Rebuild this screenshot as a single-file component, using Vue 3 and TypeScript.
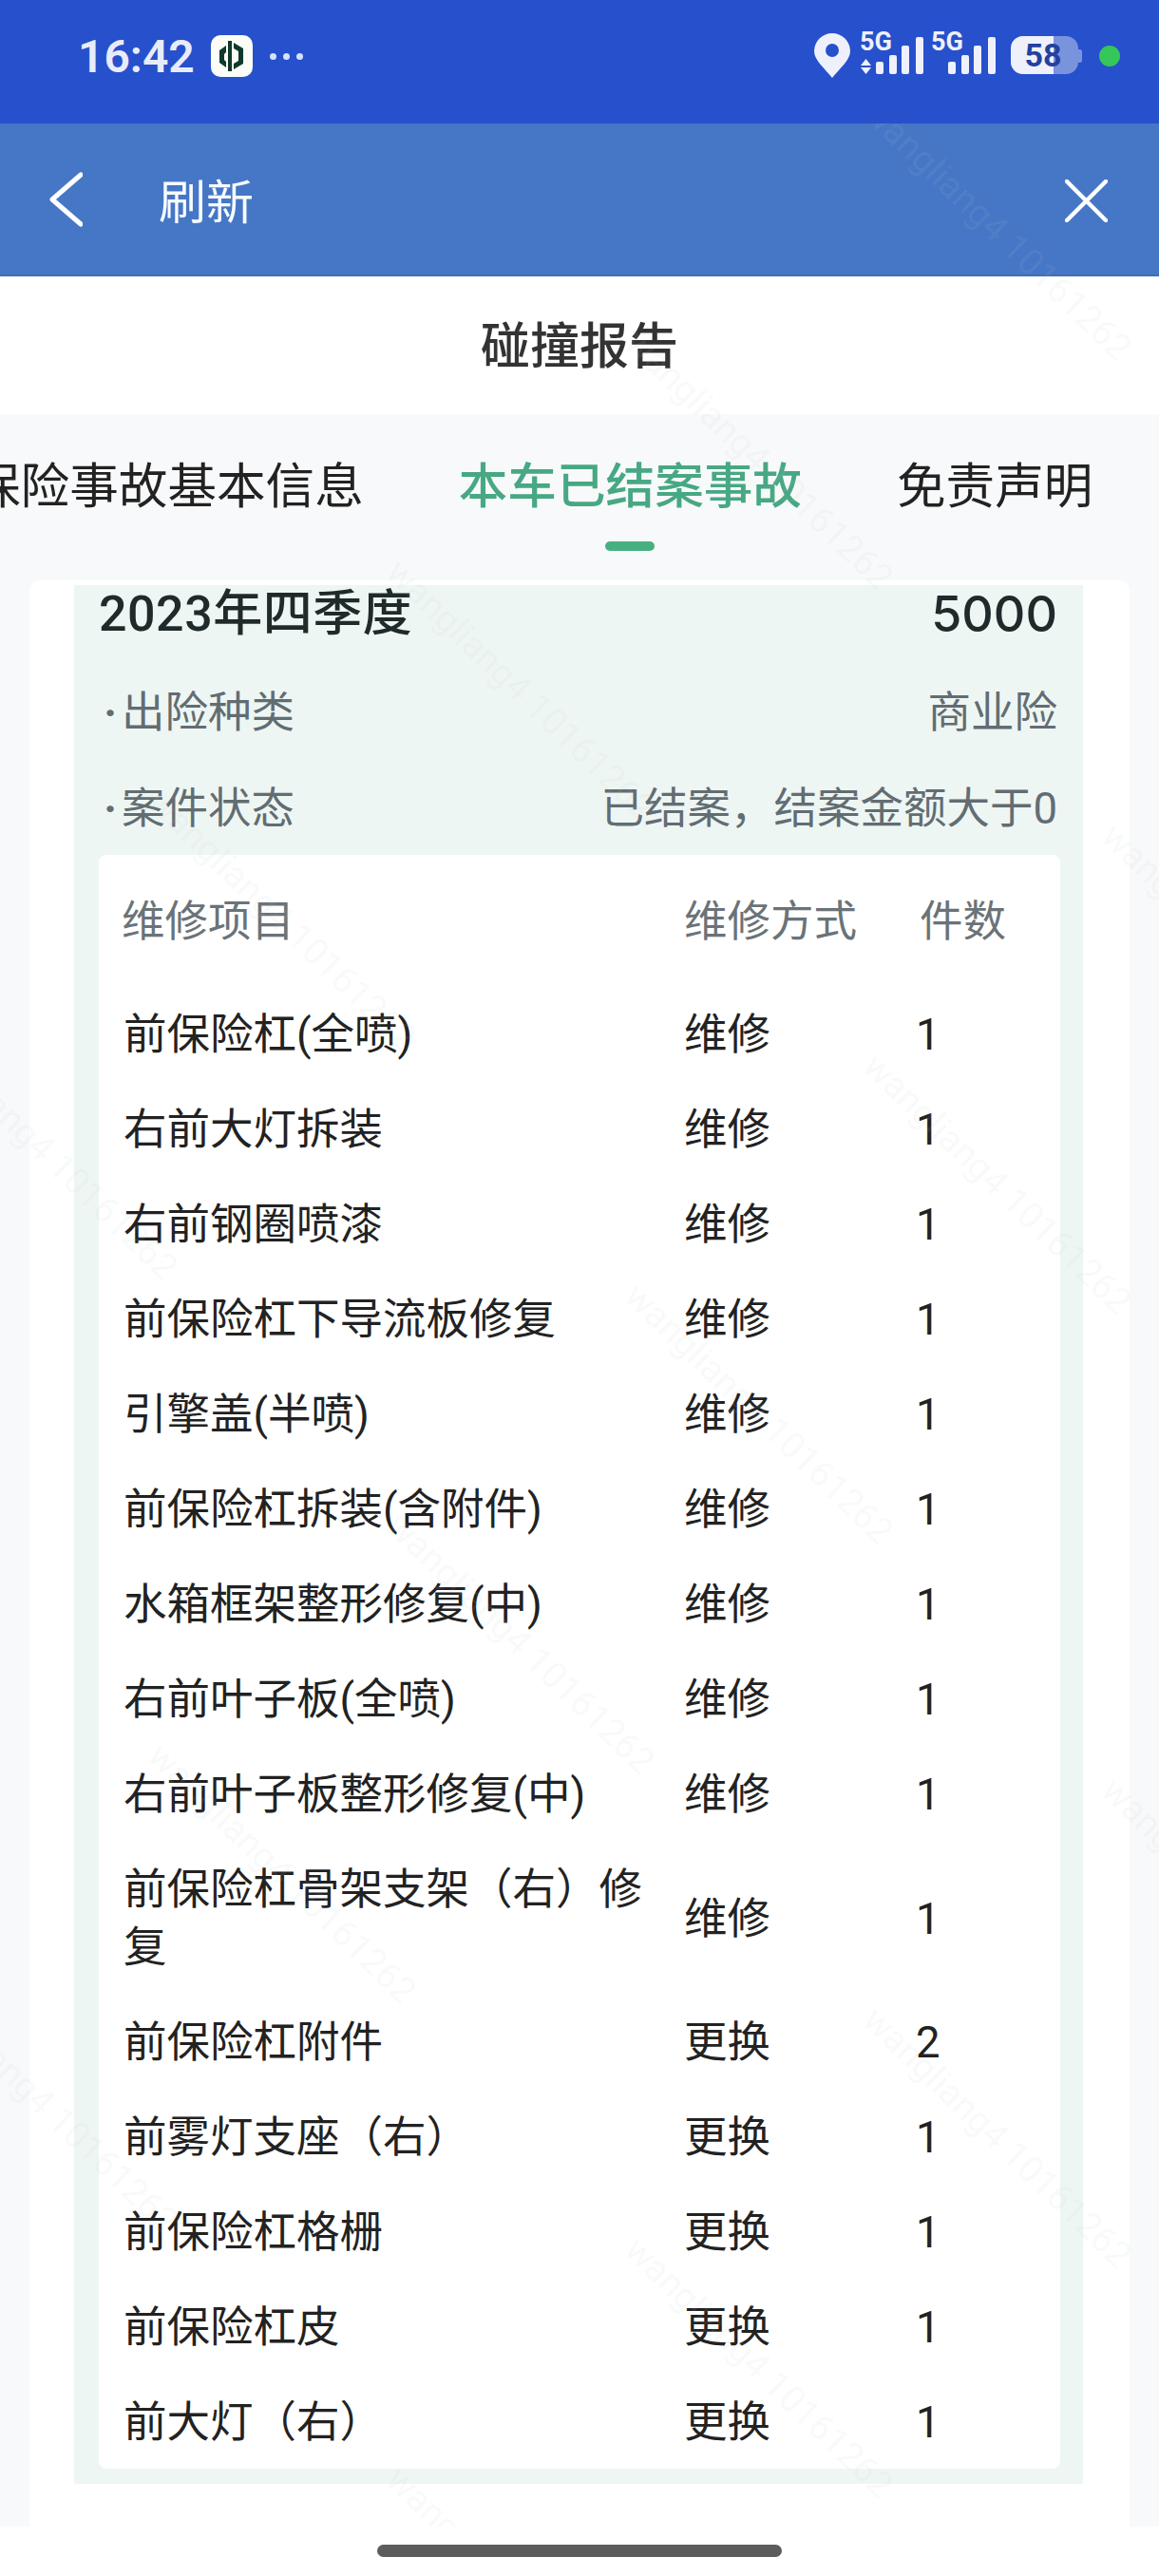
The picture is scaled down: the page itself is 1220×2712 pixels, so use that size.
<script setup lang="ts">
interface RepairRow {
  name: string
  way: string
  count: number
}

const rows: RepairRow[] = [
  { name: '前保险杠(全喷)', way: '维修', count: 1 },
  { name: '右前大灯拆装', way: '维修', count: 1 },
  { name: '右前钢圈喷漆', way: '维修', count: 1 },
  { name: '前保险杠下导流板修复', way: '维修', count: 1 },
  { name: '引擎盖(半喷)', way: '维修', count: 1 },
  { name: '前保险杠拆装(含附件)', way: '维修', count: 1 },
  { name: '水箱框架整形修复(中)', way: '维修', count: 1 },
  { name: '右前叶子板(全喷)', way: '维修', count: 1 },
  { name: '右前叶子板整形修复(中)', way: '维修', count: 1 },
  { name: '前保险杠骨架支架（右）修复', way: '维修', count: 1 },
  { name: '前保险杠附件', way: '更换', count: 2 },
  { name: '前雾灯支座（右）', way: '更换', count: 1 },
  { name: '前保险杠格栅', way: '更换', count: 1 },
  { name: '前保险杠皮', way: '更换', count: 1 },
  { name: '前大灯（右）', way: '更换', count: 1 },
]

const tabs = ['保险事故基本信息', '本车已结案事故', '免责声明']

// watermark sits on a slanted lattice over the whole webview
const marks: { left: number; top: number }[] = []
for (let col = 0; col < 3; col++) {
  for (let i = -2; i < 5; i++) {
    marks.push({ left: 1050 - 251 * i, top: 112 + 242 * i + 1004 * col })
  }
}
</script>

<template>
  <div class="screen">
    <header class="status">
      <span class="time">16:42</span>
      <svg class="app-icon" viewBox="0 0 44 44" width="44" height="44">
        <rect width="44" height="44" rx="10" fill="#fbfcf6" />
        <path d="M9 16l7-5v7l-2 2v6l2 2v6l-7-5z" fill="#11382c" />
        <path d="M18 6h4v32h-4z" fill="#11382c" />
        <path d="M24 8l10 6v16l-10 6v-6l5-3V17l-5-3z" fill="#11382c" />
      </svg>
      <span class="more"><i></i><i></i><i></i></span>
      <svg class="indicators" viewBox="857 29 322 60" width="322" height="60">
        <path d="M876 82C868 72 857 63 857 54a19 19 0 0 1 38 0C895 63 884 72 876 82z" fill="#eef1fb" />
        <circle cx="876" cy="53" r="7" fill="#2750cc" />
        <text x="905" y="53" class="net">5G</text>
        <path d="M911.500 62L917 69H906zM906 71H917L911.500 78z" fill="#eef1fb" />
        <rect x="922" y="65" width="8" height="13" rx="2" fill="#eef1fb" />
        <rect x="936" y="58" width="8" height="20" rx="2" fill="#eef1fb" />
        <rect x="949" y="48" width="8" height="30" rx="2" fill="#eef1fb" />
        <rect x="964" y="39" width="8" height="39" rx="2" fill="#eef1fb" />
        <text x="980" y="53" class="net">5G</text>
        <rect x="998" y="65" width="8" height="13" rx="2" fill="#eef1fb" />
        <rect x="1012" y="58" width="8" height="20" rx="2" fill="#eef1fb" />
        <rect x="1025" y="48" width="8" height="30" rx="2" fill="#eef1fb" />
        <rect x="1040" y="39" width="8" height="39" rx="2" fill="#eef1fb" />
        <rect x="1064" y="38" width="71" height="40" rx="13" fill="#7a93dd" />
        <path d="M1135 52h1.500a2.500 2.500 0 0 1 2.500 2.500v9a2.500 2.500 0 0 1-2.500 2.500H1135z" fill="#7a93dd" />
        <path d="M1077 38h32v40h-32a13 13 0 0 1-13-13V51a13 13 0 0 1 13-13z" fill="#eef1fb" />
        <text x="1098" y="70" text-anchor="middle" class="level">58</text>
        <circle cx="1168" cy="59" r="11" fill="#35c759" />
      </svg>
    </header>

    <nav class="nav">
      <svg viewBox="0 0 35 58" width="35" height="58" fill="none" stroke="#fff" stroke-width="5" stroke-linecap="round" stroke-linejoin="round">
        <path d="M33 3L3 29L33 55" />
      </svg>
      <span class="nav-title">刷新</span>
      <svg class="close" viewBox="0 0 45 45" width="45" height="45" fill="none" stroke="#fff" stroke-width="4.500" stroke-linecap="round">
        <path d="M2 2L43 43M43 2L2 43" />
      </svg>
    </nav>

    <h1 class="title">碰撞报告</h1>

    <div class="tabs">
      <div v-for="(tab, i) in tabs" :key="tab" class="tab" :class="{ active: i === 1 }">
        <span>{{ tab }}</span>
        <i class="tab-bar"></i>
      </div>
    </div>

    <main class="card">
      <section class="panel">
        <div class="panel-head">
          <span>2023年四季度</span>
          <span class="amount">5000</span>
        </div>
        <div class="info">
          <span><span class="dot">·</span>出险种类</span>
          <span>商业险</span>
        </div>
        <div class="info">
          <span><span class="dot">·</span>案件状态</span>
          <span>已结案，结案金额大于0</span>
        </div>
        <div class="table">
          <div class="row head">
            <span class="head-name">维修项目</span>
            <span>维修方式</span>
            <span class="head-count">件数</span>
          </div>
          <div v-for="row in rows" :key="row.name" class="row">
            <span class="name">{{ row.name }}</span>
            <span>{{ row.way }}</span>
            <span class="count">{{ row.count }}</span>
          </div>
        </div>
      </section>
    </main>

    <footer class="home">
      <i class="home-bar"></i>
    </footer>

    <div class="watermarks">
      <span
        v-for="(m, i) in marks"
        :key="i"
        class="mark"
        :style="{ left: m.left + 'px', top: m.top + 'px' }"
      >wangliang4 10161262</span>
    </div>
  </div>
</template>

<style>
html,
body {
  margin: 0;
  background: #fff;
}
</style>

<style scoped>
.screen {
  position: relative;
  width: 1220px;
  height: 2712px;
  overflow: hidden;
  background: #f8f9fa;
  font-family: Roboto, "Noto Sans CJK SC", sans-serif;
  color: #222;
}

.status {
  display: flex;
  align-items: center;
  height: 130px;
  padding: 0 41px 12px 82px;
  box-sizing: border-box;
  background: #2750cc;
}

.time {
  font-size: 48px;
  font-weight: 600;
  color: #e8ecfa;
}

.app-icon {
  margin-left: 17px;
}

.more {
  display: flex;
  gap: 7px;
  margin-left: 18px;
}

.more i {
  width: 7px;
  height: 7px;
  border-radius: 50%;
  background: #d5e2fb;
}

.indicators {
  margin-left: auto;
}

.net {
  font-size: 27px;
  font-weight: 700;
  fill: #eef1fb;
}

.level {
  font-size: 34px;
  font-weight: 700;
  fill: #25409f;
}

.nav {
  display: flex;
  align-items: center;
  height: 161px;
  padding: 0 54px 0 52px;
  box-sizing: border-box;
  background: #4677c6;
  border-bottom: 2px solid #3f6fb4;
}

.nav-title {
  margin: 0 0 2px 80px;
  font-size: 50px;
  color: #f6fbff;
}

.close {
  margin: 3px 0 0 auto;
}

.title {
  margin: 0;
  height: 145px;
  line-height: 150px;
  background: #fff;
  text-align: center;
  font-size: 52px;
  font-weight: 500;
  color: #333;
}

.tabs {
  display: flex;
  gap: 100px;
  height: 175px;
  margin-left: -30px;
  font-size: 51.600px;
  white-space: nowrap;
}

.tab {
  display: flex;
  flex-direction: column;
  align-items: center;
  padding-top: 43px;
}

.tab span {
  line-height: 68px;
}

.tab-bar {
  display: none;
  width: 52px;
  height: 10px;
  margin-top: 23px;
  border-radius: 5px;
  background: #47b081;
}

.tab.active {
  color: #47a883;
  font-weight: 500;
}

.tab.active .tab-bar {
  display: block;
}

.card {
  height: 2049px;
  margin: 0 31px;
  padding: 5px 49px 0 47px;
  box-sizing: border-box;
  background: #fff;
  border-radius: 10px 10px 0 0;
}

.panel {
  padding: 0 24px 16px 26px;
  background: #eef6f4;
}

.panel-head {
  display: flex;
  justify-content: space-between;
  height: 83px;
  margin-right: 3px;
  line-height: 62px;
  font-size: 52px;
  font-weight: 500;
  letter-spacing: 0.5px;
  color: #1f2a2a;
}

.amount {
  font-family: Inter, sans-serif;
  letter-spacing: 0;
}

.info {
  display: flex;
  justify-content: space-between;
  height: 100.500px;
  margin-right: 3px;
  line-height: 104px;
  font-size: 45.500px;
  color: #626d72;
}

.dot {
  display: inline-block;
  width: 24px;
  text-align: center;
  font-weight: 700;
}

.table {
  background: #fff;
  border-radius: 8px;
}

.row {
  display: grid;
  grid-template-columns: 590px 246px 1fr;
  align-items: center;
  padding: 21px 0 18px 26px;
  font-size: 45.500px;
  line-height: 61px;
}

.row.head {
  height: 138px;
  padding-top: 3px;
  padding-bottom: 0;
  box-sizing: border-box;
  color: #6a7378;
}

.head-name {
  margin-left: -2px;
}

.head-count {
  margin-left: 2px;
}

.name {
  padding-right: 20px;
}

.count {
  margin-left: -2px;
}

.home {
  display: flex;
  justify-content: center;
  height: 52px;
  padding-top: 19px;
  box-sizing: border-box;
  background: #fff;
}

.home-bar {
  width: 426px;
  height: 13px;
  border-radius: 7px;
  background: #5c5c5c;
}

.watermarks {
  position: absolute;
  inset: 130px 0 52px;
  overflow: hidden;
  pointer-events: none;
}

.mark {
  position: absolute;
  transform: translate(-50%, -50%) rotate(44deg);
  font-size: 38px;
  white-space: nowrap;
  color: rgba(190, 195, 200, 0.09);
}
</style>
